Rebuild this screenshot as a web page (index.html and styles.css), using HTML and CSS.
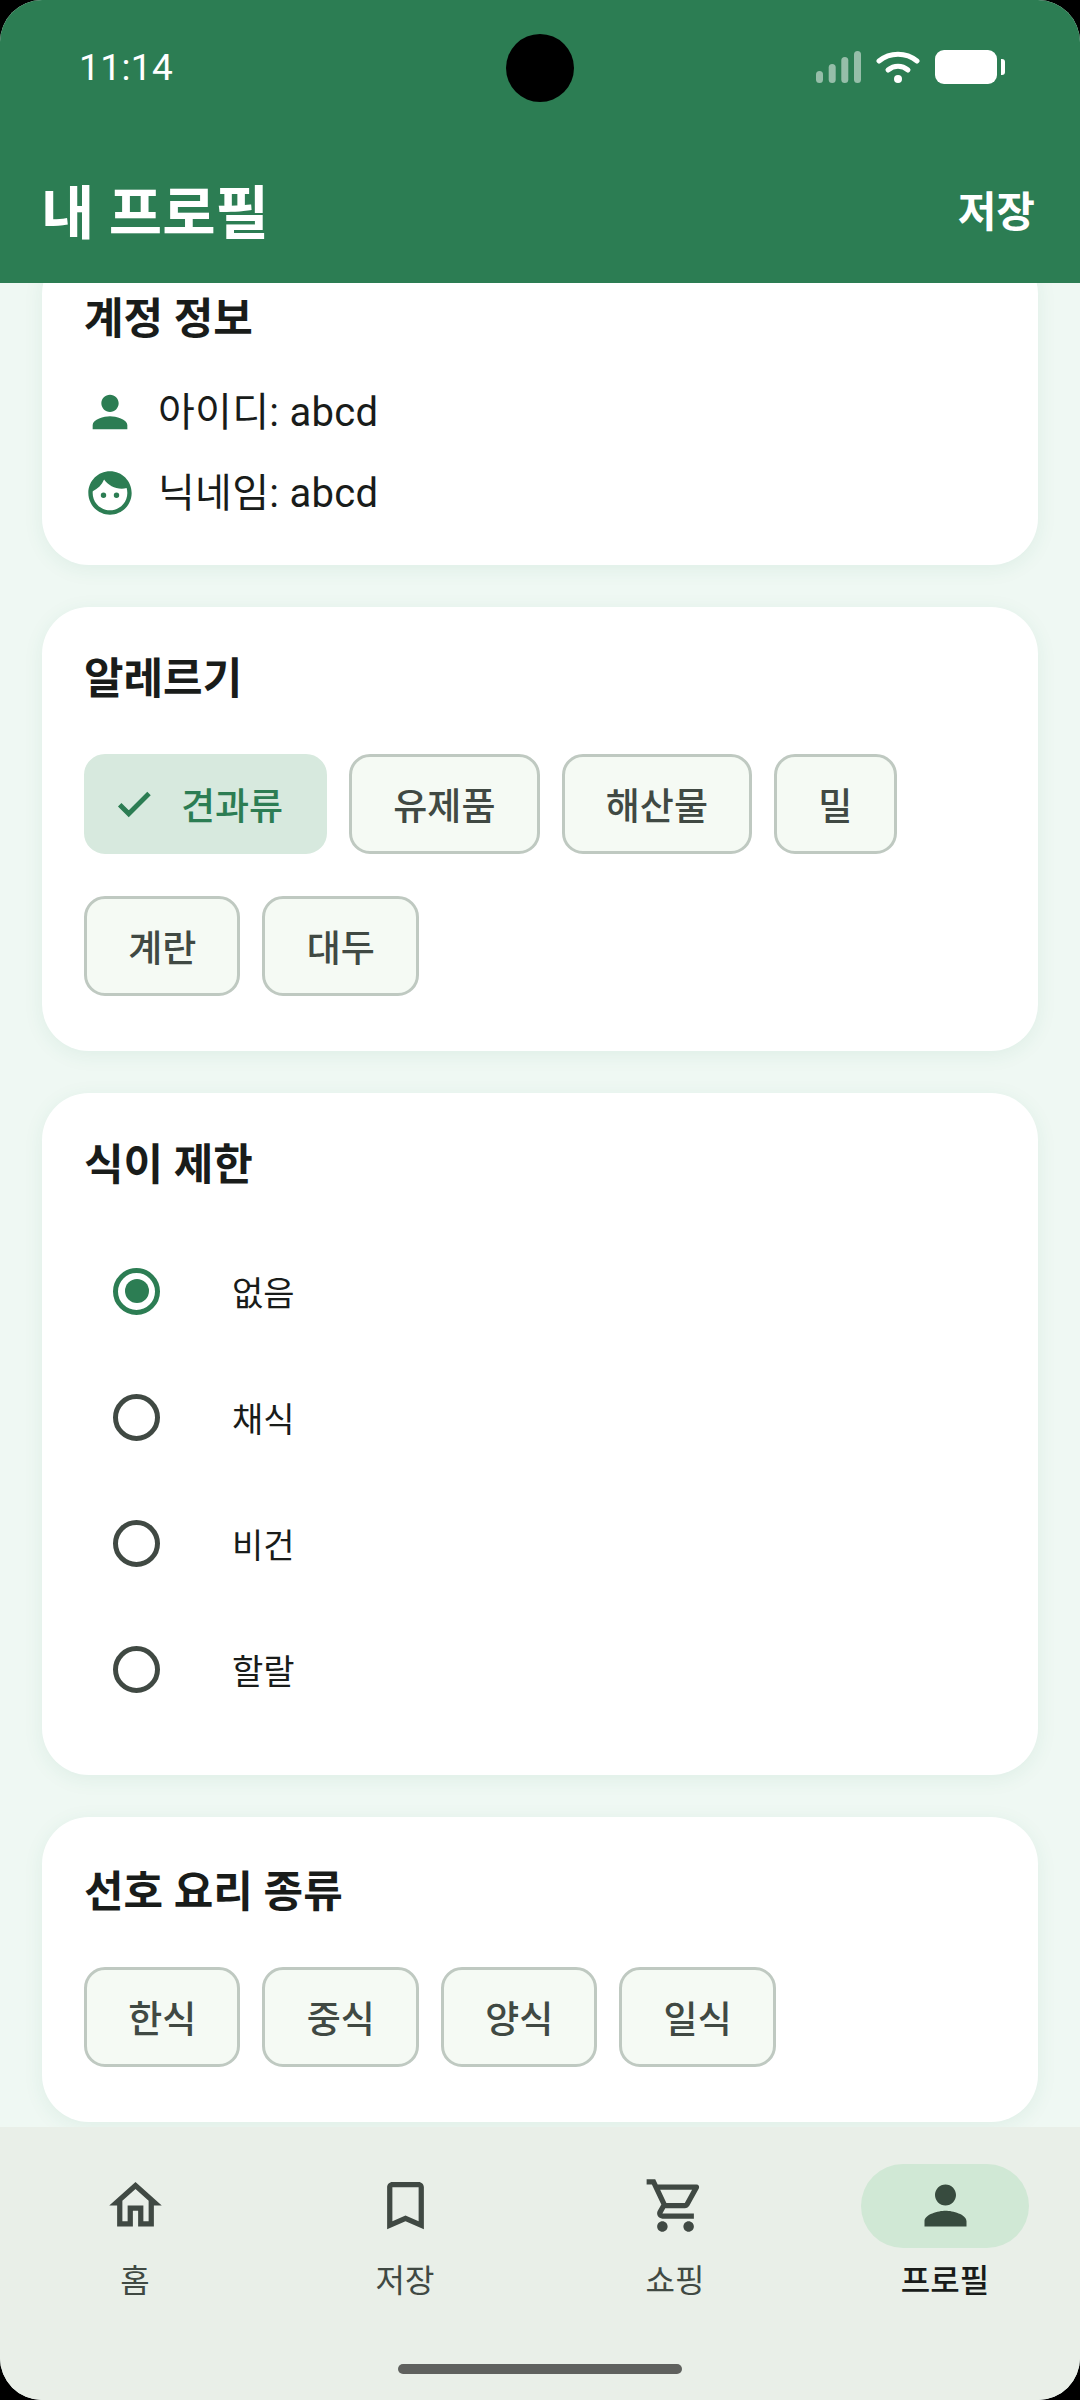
FILE: index.html
```html
<!DOCTYPE html>
<html lang="ko">
<head>
  <meta charset="UTF-8" />
  <meta name="viewport" content="width=device-width, initial-scale=1.0" />
  <title>내 프로필</title>
  <link rel="stylesheet" href="styles.css">
</head>
<body>
  <div class="screen">
    <header class="appbar">
      <div class="status-bar">
        <span class="clock">11:14</span>
        <span class="camera"></span>
        <div class="status-icons">
          <svg class="signal" width="45" height="32" viewBox="0 0 45 32"><g fill="#fff" fill-opacity="0.5"><rect x="0" y="20" width="7" height="12" rx="3.5"/><rect x="12.7" y="13" width="7" height="19" rx="3.5"/><rect x="25.3" y="6" width="7" height="26" rx="3.5"/><rect x="38" y="0" width="7" height="32" rx="3.5"/></g></svg>
          <svg class="wifi" width="44" height="32" viewBox="0 0 44 32"><g fill="none" stroke="#fff" stroke-width="5" stroke-linecap="round"><path d="M3 10C14 1 30 1 41 10"/><path d="M12 19C18 14 26 14 32 19"/></g><circle cx="22" cy="28" r="4" fill="#fff"/></svg>
          <svg class="battery" width="70" height="34" viewBox="0 0 70 34"><rect x="0" y="0" width="62" height="34" rx="9" fill="#fff"/><path d="M66 9h1a3 3 0 0 1 3 3v10a3 3 0 0 1-3 3h-1z" fill="#fff"/></svg>
        </div>
      </div>
      <div class="toolbar">
        <h1>내 프로필</h1>
        <span class="save">저장</span>
      </div>
    </header>

    <main class="content">
      <section class="card card-account">
        <h2>계정 정보</h2>
        <div class="info-row">
          <svg class="info-icon" viewBox="0 0 24 24"><path d="M12 12c2.21 0 4-1.79 4-4s-1.79-4-4-4-4 1.79-4 4 1.79 4 4 4zm0 2c-2.67 0-8 1.34-8 4v2h16v-2c0-2.66-5.33-4-8-4z"/></svg>
          <span class="info-text">아이디: abcd</span>
        </div>
        <div class="info-row">
          <svg class="info-icon" viewBox="0 0 24 24"><path d="M9 11.75a1.25 1.25 0 1 0 0 2.5 1.25 1.25 0 0 0 0-2.5zm6 0a1.25 1.25 0 1 0 0 2.5 1.25 1.25 0 0 0 0-2.5zM12 2C6.48 2 2 6.48 2 12s4.48 10 10 10 10-4.48 10-10S17.52 2 12 2zm0 18c-4.41 0-8-3.59-8-8 0-.29.02-.58.05-.86 2.36-1.05 4.23-2.98 5.21-5.37C11.07 8.33 14.05 10 17.42 10c.78 0 1.53-.09 2.25-.26.21.71.33 1.47.33 2.26 0 4.41-3.59 8-8 8z"/></svg>
          <span class="info-text">닉네임: abcd</span>
        </div>
      </section>

      <section class="card">
        <h2>알레르기</h2>
        <div class="chips">
          <span class="chip chip-on">
            <svg class="check" viewBox="0 0 24 24"><path d="M9 16.17 4.83 12l-1.42 1.41L9 19 21 7l-1.41-1.41z"/></svg>
            견과류
          </span>
          <span class="chip">유제품</span>
          <span class="chip">해산물</span>
          <span class="chip">밀</span>
          <span class="chip">계란</span>
          <span class="chip">대두</span>
        </div>
      </section>

      <section class="card card-diet">
        <h2>식이 제한</h2>
        <div class="radio-row"><span class="radio radio-on"></span><span>없음</span></div>
        <div class="radio-row"><span class="radio"></span><span>채식</span></div>
        <div class="radio-row"><span class="radio"></span><span>비건</span></div>
        <div class="radio-row"><span class="radio"></span><span>할랄</span></div>
      </section>

      <section class="card card-cuisine">
        <h2>선호 요리 종류</h2>
        <div class="chips">
          <span class="chip">한식</span>
          <span class="chip">중식</span>
          <span class="chip">양식</span>
          <span class="chip">일식</span>
        </div>
      </section>
    </main>

    <nav class="bottom-nav">
      <div class="nav-items">
        <div class="nav-item">
          <span class="nav-icon"><svg viewBox="0 0 24 24"><path d="m12 5.69 5 4.5V18h-2v-6H9v6H7v-7.81l5-4.5M12 3 2 12h3v8h6v-6h2v6h6v-8h3L12 3z"/></svg></span>
          <span class="nav-label">홈</span>
        </div>
        <div class="nav-item">
          <span class="nav-icon"><svg viewBox="0 0 24 24"><path d="M17 3H7c-1.1 0-2 .9-2 2v16l7-3 7 3V5c0-1.1-.9-2-2-2zm0 15-5-2.18L7 18V5h10v13z"/></svg></span>
          <span class="nav-label">저장</span>
        </div>
        <div class="nav-item">
          <span class="nav-icon"><svg viewBox="0 0 24 24"><path d="M15.55 13c.75 0 1.41-.41 1.75-1.03l3.58-6.49A.996.996 0 0 0 20.01 4H5.21l-.94-2H1v2h2l3.6 7.59-1.35 2.44C4.52 15.37 5.48 17 7 17h12v-2H7l1.1-2h7.45zM6.16 6h12.15l-2.76 5H8.53L6.16 6zM7 18c-1.1 0-1.99.9-1.99 2S5.9 22 7 22s2-.9 2-2-.9-2-2-2zm10 0c-1.1 0-1.99.9-1.99 2s.89 2 1.99 2 2-.9 2-2-.9-2-2-2z"/></svg></span>
          <span class="nav-label">쇼핑</span>
        </div>
        <div class="nav-item nav-item-on">
          <span class="nav-icon"><svg viewBox="0 0 24 24"><path d="M12 12c2.21 0 4-1.79 4-4s-1.79-4-4-4-4 1.79-4 4 1.79 4 4 4zm0 2c-2.67 0-8 1.34-8 4v2h16v-2c0-2.66-5.33-4-8-4z"/></svg></span>
          <span class="nav-label">프로필</span>
        </div>
      </div>
      <div class="home-bar"></div>
    </nav>
  </div>
</body>
</html>
```

FILE: styles.css
```css
* { box-sizing: border-box; }
html, body { margin: 0; padding: 0; background: #000; }
body { font-family: Roboto, "Noto Sans CJK KR", sans-serif; color: #191c1a; }

.screen { width: 1080px; height: 2400px; display: flex; flex-direction: column; overflow: hidden; border-radius: 42px; background: #eff8f3; }

.appbar { background: #2c7d53; color: #fff; height: 283px; flex: none; position: relative; z-index: 2; }
.status-bar { height: 134px; display: flex; align-items: center; justify-content: space-between; padding: 0 75px 0 79px; }
.clock { font-size: 37px; letter-spacing: 0.4px; }
.camera { position: absolute; left: 506px; top: 34px; width: 68px; height: 68px; border-radius: 50%; background: #000; }
.status-icons { display: flex; align-items: center; gap: 15px; }
.toolbar { display: flex; align-items: center; justify-content: space-between; padding: 0 45px 0 41px; height: 149px; }
.toolbar h1 { margin: 0; font-size: 58px; font-weight: 700; }
.save { font-size: 42px; font-weight: 700; }

.content { flex: 1; min-height: 0; display: flex; flex-direction: column; gap: 42px; padding: 0 42px; overflow: hidden; }
.card { background: #fff; border-radius: 47px; padding: 42px 42px 55px; box-shadow: 0 4px 20px rgba(44, 125, 83, 0.08); flex: none; }
.card h2 { margin: 0; font-size: 43px; line-height: 60px; font-weight: 700; }

.card-account { margin-top: -36px; padding-bottom: 32px; }
.card-account h2 { margin-bottom: 22px; }
.info-row { display: flex; align-items: center; gap: 22px; font-size: 40px; letter-spacing: 0.3px; height: 81px; }
.info-text { padding-bottom: 6px; }
.info-icon { width: 52px; height: 52px; fill: #2c7d53; flex: none; }

.chips { display: flex; flex-wrap: wrap; gap: 42px 22px; margin-top: 45px; }
.chip { height: 100px; padding: 0 41.2px; display: flex; align-items: center; border: 3px solid #bfc9c1; border-radius: 21px; background: #f5faf4; font-size: 37px; font-weight: 500; color: #404943; }
.chip-on { background: #d7e9de; border-color: #d7e9de; color: #2c7d53; gap: 26px; padding: 0 41px 0 26px; }
.check { width: 42px; height: 42px; fill: #2c7d53; stroke: #2c7d53; stroke-width: 0.8; }

.card-diet { padding-bottom: 43px; }
.card-diet h2 { margin-bottom: 33px; }
.radio-row { display: flex; align-items: center; height: 126px; font-size: 34px; padding-left: 29px; gap: 72px; }
.radio { width: 47px; height: 47px; border: 5px solid #404943; border-radius: 50%; flex: none; display: flex; align-items: center; justify-content: center; }
.radio-on { border-color: #2c7d53; }
.radio-on::after { content: ""; width: 24px; height: 24px; border-radius: 50%; background: #2c7d53; }

.card-cuisine { padding-top: 45px; }

.bottom-nav { height: 273px; flex: none; background: #e9efe8; display: flex; flex-direction: column; position: relative; z-index: 2; }
.nav-items { display: flex; padding-top: 37px; }
.nav-item { flex: 1; display: flex; flex-direction: column; align-items: center; gap: 7px; font-size: 32px; color: #404943; }
.nav-icon { width: 168px; height: 84px; border-radius: 42px; display: flex; align-items: center; justify-content: center; }
.nav-icon svg { width: 63px; height: 63px; fill: #404943; margin-top: -2px; }
.nav-item-on .nav-icon { background: #d0e8d5; }
.nav-item-on .nav-icon svg { fill: #374b3e; }
.nav-item-on .nav-label { color: #191c1a; font-weight: 500; }
.home-bar { position: absolute; left: 398px; bottom: 26px; width: 284px; height: 10px; border-radius: 5px; background: #5f615e; }
```
